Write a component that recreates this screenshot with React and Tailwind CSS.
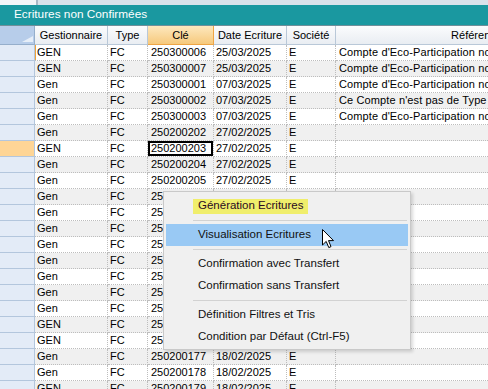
import React from 'react';

const cols = [
  { key: 'gest', label: 'Gestionnaire', w: 'w-[73px]' },
  { key: 'type', label: 'Type', w: 'w-[40px]' },
  { key: 'cle', label: 'Clé', w: 'w-[66px]' },
  { key: 'date', label: 'Date Ecriture', w: 'w-[73px]' },
  { key: 'soc', label: 'Société', w: 'w-[49px]' },
  { key: 'ref', label: 'Référence', w: 'w-[282px]' },
];

const eco = "Compte d'Eco-Participation non";

const rows = [
  ['GEN', 'FC', '250300006', '25/03/2025', 'E', eco],
  ['GEN', 'FC', '250300007', '25/03/2025', 'E', eco],
  ['Gen', 'FC', '250300001', '07/03/2025', 'E', eco],
  ['Gen', 'FC', '250300002', '07/03/2025', 'E', "Ce Compte n'est pas de Type P"],
  ['Gen', 'FC', '250300003', '07/03/2025', 'E', eco],
  ['Gen', 'FC', '250200202', '27/02/2025', 'E', ''],
  ['GEN', 'FC', '250200203', '27/02/2025', 'E', ''],
  ['Gen', 'FC', '250200204', '27/02/2025', 'E', ''],
  ['Gen', 'FC', '250200205', '27/02/2025', 'E', ''],
  ['Gen', 'FC', '250200206', '26/02/2025', 'E', ''],
  ['Gen', 'FC', '250200207', '26/02/2025', 'E', ''],
  ['Gen', 'FC', '250200208', '26/02/2025', 'E', ''],
  ['Gen', 'FC', '250200209', '26/02/2025', 'E', ''],
  ['Gen', 'FC', '250200210', '25/02/2025', 'E', ''],
  ['Gen', 'FC', '250200211', '25/02/2025', 'E', ''],
  ['Gen', 'FC', '250200212', '25/02/2025', 'E', ''],
  ['Gen', 'FC', '250200213', '25/02/2025', 'E', ''],
  ['GEN', 'FC', '250200175', '18/02/2025', 'E', ''],
  ['GEN', 'FC', '250200176', '18/02/2025', 'E', ''],
  ['Gen', 'FC', '250200177', '18/02/2025', 'E', ''],
  ['Gen', 'FC', '250200178', '18/02/2025', 'E', ''],
  ['GEN', 'FC', '250200179', '18/02/2025', 'E', ''],
];

const SELECTED = 6;

const MenuItem = ({ children, active, marked }) => (
  <div className={`h-[22px] flex items-center ${active ? 'bg-[#99c9f4]' : ''}`}>
    <div className="w-[27px]" />
    {marked ? (
      <span className="bg-[#f0ee6c] h-[15px] px-[5px] flex items-center text-[#2a0a22]">{children}</span>
    ) : (
      <span className="pl-[5px]">{children}</span>
    )}
  </div>
);

const Sep = () => (
  <div className="h-[7px] flex items-center pl-[27px] pr-[1px]">
    <div className="h-px w-full bg-[#d2d2d2]" />
  </div>
);

export default function App() {
  return (
    <div
      className="relative w-[488px] h-[389px] overflow-hidden bg-white text-black"
      style={{ fontFamily: '"Liberation Sans", Arial, sans-serif' }}
    >
      {/* tab strip */}
      <div className="flex h-[5px] bg-[#d9e2ea]">
        <div className="w-[38px] bg-[#f3f5f8] border-r-2 border-[#a9b8c6]" />
      </div>

      {/* title bar */}
      <div className="h-[21px] bg-[#1a98a0] border-b border-[#6f8f9a] flex items-center pl-[14px] text-white text-[11.8px]">
        Ecritures non Confirmées
      </div>

      {/* header */}
      <div className="flex h-[19px] text-[11px] whitespace-nowrap">
        <div className="relative w-[35px] shrink-0 bg-[#b7cdea] border-r border-b border-[#95aecb]">
          <svg className="absolute right-[1px] bottom-[2px]" width="11" height="6" viewBox="0 0 11 6">
            <polygon points="11,0 11,6 0,6" fill="#e6eef8" />
          </svg>
        </div>
        {cols.map((c) => (
          <div
            key={c.key}
            className={`${c.w} shrink-0 flex items-center justify-center overflow-hidden border-r border-b ${
              c.key === 'cle'
                ? 'bg-gradient-to-b from-[#fde8bd] to-[#f6c97c] border-[#eea545]'
                : 'bg-gradient-to-b from-[#fbfcfd] to-[#e9edf2] border-[#b9c8d8]'
            }`}
          >
            {c.label}
          </div>
        ))}
      </div>

      {/* rows */}
      {rows.map((r, i) => (
        <div key={i} className="flex h-[16px] text-[11px] leading-[15px] whitespace-nowrap">
          <div
            className={`w-[35px] shrink-0 border-r border-b border-[#b3c6dd] ${
              i === SELECTED ? 'bg-[#fed596]' : 'bg-[#e3ebf7]'
            }`}
          />
          {cols.map((c, j) => (
            <div
              key={c.key}
              className={`${c.w} shrink-0 overflow-hidden border-r border-b border-dotted border-[#bdbdbd] ${
                i % 2 === 0 ? 'bg-white' : 'bg-[#f0f0f0]'
              } ${i === SELECTED && c.key === 'cle' ? 'ring-2 ring-inset ring-black' : ''} ${
                i === 0 && j === 0 ? 'shadow-[inset_1px_0_0_#f0a338]' : ''
              } ${c.key === 'cle' || c.key === 'ref' ? 'pl-[3px]' : 'pl-[2px]'} ${
                c.key === 'ref' ? 'tracking-[0.12px]' : ''
              }`}
            >
              {r[j]}
            </div>
          ))}
        </div>
      ))}

      {/* context menu */}
      <div className="absolute left-[163px] top-[191px] w-[248px] h-[159px] bg-[#f0f0f0] border border-[#c9c9c9] shadow-[2px_2px_3px_rgba(0,0,0,0.15)] pt-[3px] px-[2px] text-[11.5px] text-[#111]">
        <MenuItem marked>Génération Ecritures</MenuItem>
        <Sep />
        <MenuItem active>Visualisation Ecritures</MenuItem>
        <Sep />
        <MenuItem>Confirmation avec Transfert</MenuItem>
        <MenuItem>Confirmation sans Transfert</MenuItem>
        <Sep />
        <MenuItem>Définition Filtres et Tris</MenuItem>
        <MenuItem>Condition par Défaut (Ctrl-F5)</MenuItem>
      </div>

      {/* mouse pointer */}
      <svg className="absolute left-[322px] top-[229px]" width="13" height="20" viewBox="0 0 13 20">
        <path
          d="M0.5 0.5 L0.5 16 L4.2 12.4 L6.8 18.6 L9 17.6 L6.5 11.6 L11.5 11.6 Z"
          fill="white"
          stroke="black"
          strokeWidth="1"
          strokeLinejoin="miter"
        />
      </svg>
    </div>
  );
}
